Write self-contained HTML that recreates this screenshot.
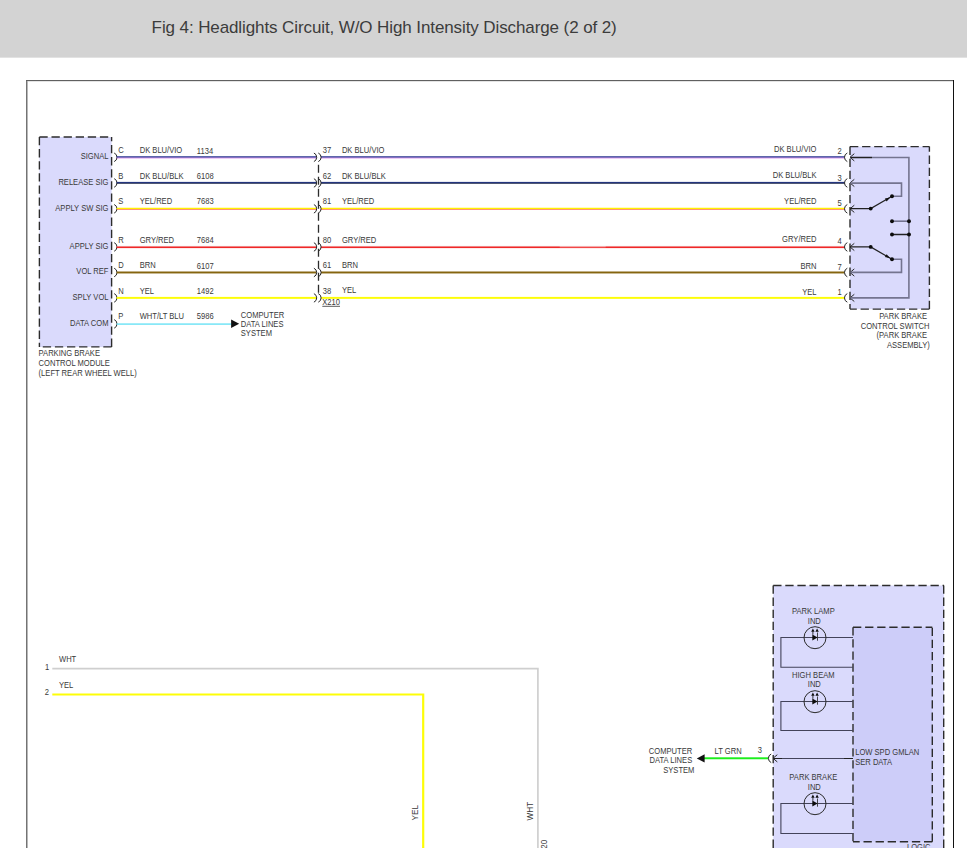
<!DOCTYPE html>
<html lang="en"><head><meta charset="utf-8"><title>Fig 4: Headlights Circuit, W/O High Intensity Discharge (2 of 2)</title>
<style>
html,body{margin:0;padding:0;background:#fff;}
body{width:967px;height:868px;position:relative;overflow:hidden;font-family:"Liberation Sans",Arial,sans-serif;}
#hdr{position:absolute;left:0;top:0;width:967px;height:57px;background:#d3d3d3;}
#ttl{position:absolute;left:151.6px;top:17px;font-size:17px;line-height:22px;color:#3c3c3c;white-space:nowrap;letter-spacing:-0.1px}
svg{position:absolute;left:0;top:0;}
svg text{font-family:"Liberation Sans",Arial,sans-serif;fill:#3a3a3a;}
.k{fill:none;stroke:#222;stroke-width:1;}
.g2{fill:none;stroke:#43435a;stroke-width:1.1;}
.a{fill:none;stroke:#262626;stroke-width:1;}
.g{fill:none;stroke:#74748f;stroke-width:1.6;}
.d{fill:none;stroke:#2c2c2c;stroke-width:1.4;stroke-dasharray:8.3 3.8;}
</style></head><body>
<div id="hdr"></div>
<div id="ttl">Fig 4: Headlights Circuit, W/O High Intensity Discharge (2 of 2)</div>
<svg width="967" height="868" viewBox="0 0 967 868">

<rect x="0" y="57" width="967" height="1" fill="#e2e2e2"/>
<rect x="26" y="80" width="1" height="768" fill="#737373"/>
<rect x="27" y="80" width="0.7" height="768" fill="#9a9a9a"/>
<rect x="26" y="80" width="928" height="1" fill="#606060"/>
<rect x="27" y="81" width="927" height="0.4" fill="#bbb"/>
<rect x="953" y="80" width="1" height="768" fill="#111"/>
<rect x="39.4" y="137" width="72.2" height="210" fill="#dadafc"/>
<path d="M39.4 137 H111.6" class="d"/><path d="M39.4 137 V346.9" class="d"/><path d="M111.6 346.9 H39.4" class="d"/><path d="M111.6 346.9 V137" class="d"/>
<rect x="850" y="146.6" width="79.4" height="162.5" fill="#dadafc"/>
<path d="M850 146.6 H929.4" class="d"/><path d="M850 146.6 V309.1" class="d"/><path d="M929.4 309.1 H850" class="d"/><path d="M929.4 309.1 V146.6" class="d"/>
<text transform="translate(108.5 159.20000000000002) scale(0.915 1)" text-anchor="end" font-size="8.3">SIGNAL</text>
<path d="M114.2 153.00 A4.7 4.7 0 0 1 114.2 161.60" class="a"/>
<text transform="translate(118.3 152.8) scale(0.915 1)" text-anchor="start" font-size="8.3">C</text>
<text transform="translate(139.7 152.8) scale(0.915 1)" text-anchor="start" font-size="8.3">DK BLU/VIO</text>
<text transform="translate(196.8 153.7) scale(0.915 1)" text-anchor="start" font-size="8.3">1134</text>
<rect x="116.6" y="156.25" width="199.9" height="1.45" fill="#2a3590"/>
<rect x="116.6" y="157.70" width="199.9" height="0.65" fill="#cc6ee6"/>
<rect x="321" y="156.25" width="523.6" height="1.45" fill="#2a3590"/>
<rect x="321" y="157.70" width="523.6" height="0.65" fill="#cc6ee6"/>
<path d="M313.9 153.00 A4.7 4.7 0 0 1 313.9 161.60" class="a"/>
<path d="M318.3 153.00 A4.7 4.7 0 0 1 318.3 161.60" class="a"/>
<text transform="translate(322.8 152.7) scale(0.915 1)" text-anchor="start" font-size="8.3">37</text>
<text transform="translate(341.9 152.7) scale(0.915 1)" text-anchor="start" font-size="8.3">DK BLU/VIO</text>
<text transform="translate(816.5 151.8) scale(0.915 1)" text-anchor="end" font-size="8.3">DK BLU/VIO</text>
<text transform="translate(837.4 153.7) scale(0.915 1)" text-anchor="start" font-size="8.3">2</text>
<path d="M847.3 153.00 A4.7 4.7 0 0 0 847.3 161.60" class="a"/>
<path d="M854.3 153.70 L850 157.30 L854.3 160.90" class="a"/>
<text transform="translate(108.5 184.85) scale(0.915 1)" text-anchor="end" font-size="8.3">RELEASE SIG</text>
<path d="M114.2 178.65 A4.7 4.7 0 0 1 114.2 187.25" class="a"/>
<text transform="translate(118.3 178.9) scale(0.915 1)" text-anchor="start" font-size="8.3">B</text>
<text transform="translate(139.7 178.9) scale(0.915 1)" text-anchor="start" font-size="8.3">DK BLU/BLK</text>
<text transform="translate(196.8 178.9) scale(0.915 1)" text-anchor="start" font-size="8.3">6108</text>
<rect x="116.6" y="181.90" width="199.9" height="1.45" fill="#24357e"/>
<rect x="116.6" y="183.35" width="199.9" height="0.65" fill="#1c2440"/>
<rect x="321" y="181.90" width="523.6" height="1.45" fill="#24357e"/>
<rect x="321" y="183.35" width="523.6" height="0.65" fill="#1c2440"/>
<path d="M313.9 178.65 A4.7 4.7 0 0 1 313.9 187.25" class="a"/>
<path d="M318.3 178.65 A4.7 4.7 0 0 1 318.3 187.25" class="a"/>
<text transform="translate(322.8 178.8) scale(0.915 1)" text-anchor="start" font-size="8.3">62</text>
<text transform="translate(341.9 178.8) scale(0.915 1)" text-anchor="start" font-size="8.3">DK BLU/BLK</text>
<text transform="translate(816.5 177.7) scale(0.915 1)" text-anchor="end" font-size="8.3">DK BLU/BLK</text>
<text transform="translate(837.4 180.8) scale(0.915 1)" text-anchor="start" font-size="8.3">3</text>
<path d="M847.3 178.65 A4.7 4.7 0 0 0 847.3 187.25" class="a"/>
<path d="M854.3 179.35 L850 182.95 L854.3 186.55" class="a"/>
<text transform="translate(108.5 210.70000000000002) scale(0.915 1)" text-anchor="end" font-size="8.3">APPLY SW SIG</text>
<path d="M114.2 204.50 A4.7 4.7 0 0 1 114.2 213.10" class="a"/>
<text transform="translate(118.3 203.8) scale(0.915 1)" text-anchor="start" font-size="8.3">S</text>
<text transform="translate(139.7 203.8) scale(0.915 1)" text-anchor="start" font-size="8.3">YEL/RED</text>
<text transform="translate(196.8 203.8) scale(0.915 1)" text-anchor="start" font-size="8.3">7683</text>
<rect x="116.6" y="207.75" width="199.9" height="1.45" fill="#fff000"/>
<rect x="116.6" y="209.20" width="199.9" height="0.65" fill="#ff5a4a"/>
<rect x="321" y="207.75" width="523.6" height="1.45" fill="#fff000"/>
<rect x="321" y="209.20" width="523.6" height="0.65" fill="#ff5a4a"/>
<path d="M313.9 204.50 A4.7 4.7 0 0 1 313.9 213.10" class="a"/>
<path d="M318.3 204.50 A4.7 4.7 0 0 1 318.3 213.10" class="a"/>
<text transform="translate(322.8 203.7) scale(0.915 1)" text-anchor="start" font-size="8.3">81</text>
<text transform="translate(341.9 203.7) scale(0.915 1)" text-anchor="start" font-size="8.3">YEL/RED</text>
<text transform="translate(816.5 203.7) scale(0.915 1)" text-anchor="end" font-size="8.3">YEL/RED</text>
<text transform="translate(837.4 205.6) scale(0.915 1)" text-anchor="start" font-size="8.3">5</text>
<path d="M847.3 204.50 A4.7 4.7 0 0 0 847.3 213.10" class="a"/>
<path d="M854.3 205.20 L850 208.80 L854.3 212.40" class="a"/>
<text transform="translate(108.5 248.85) scale(0.915 1)" text-anchor="end" font-size="8.3">APPLY SIG</text>
<path d="M114.2 242.65 A4.7 4.7 0 0 1 114.2 251.25" class="a"/>
<text transform="translate(118.3 242.8) scale(0.915 1)" text-anchor="start" font-size="8.3">R</text>
<text transform="translate(139.7 242.8) scale(0.915 1)" text-anchor="start" font-size="8.3">GRY/RED</text>
<text transform="translate(196.8 242.8) scale(0.915 1)" text-anchor="start" font-size="8.3">7684</text>
<rect x="116.6" y="245.85" width="199.9" height="0.6" fill="#e4e4e4"/>
<rect x="116.6" y="246.45" width="199.9" height="1.65" fill="#f02828"/>
<rect x="321" y="245.85" width="523.6" height="0.6" fill="#e4e4e4"/>
<rect x="321" y="246.45" width="523.6" height="1.65" fill="#f02828"/>
<path d="M313.9 242.65 A4.7 4.7 0 0 1 313.9 251.25" class="a"/>
<path d="M318.3 242.65 A4.7 4.7 0 0 1 318.3 251.25" class="a"/>
<text transform="translate(322.8 242.8) scale(0.915 1)" text-anchor="start" font-size="8.3">80</text>
<text transform="translate(341.9 242.8) scale(0.915 1)" text-anchor="start" font-size="8.3">GRY/RED</text>
<text transform="translate(816.5 241.9) scale(0.915 1)" text-anchor="end" font-size="8.3">GRY/RED</text>
<text transform="translate(837.4 243.5) scale(0.915 1)" text-anchor="start" font-size="8.3">4</text>
<path d="M847.3 242.65 A4.7 4.7 0 0 0 847.3 251.25" class="a"/>
<path d="M854.3 243.35 L850 246.95 L854.3 250.55" class="a"/>
<text transform="translate(108.5 274.4) scale(0.915 1)" text-anchor="end" font-size="8.3">VOL REF</text>
<path d="M114.2 268.20 A4.7 4.7 0 0 1 114.2 276.80" class="a"/>
<text transform="translate(118.3 267.9) scale(0.915 1)" text-anchor="start" font-size="8.3">D</text>
<text transform="translate(139.7 267.9) scale(0.915 1)" text-anchor="start" font-size="8.3">BRN</text>
<text transform="translate(196.8 268.7) scale(0.915 1)" text-anchor="start" font-size="8.3">6107</text>
<rect x="116.6" y="271.50" width="199.9" height="1.95" fill="#85650f"/>
<rect x="321" y="271.50" width="523.6" height="1.95" fill="#85650f"/>
<path d="M313.9 268.20 A4.7 4.7 0 0 1 313.9 276.80" class="a"/>
<path d="M318.3 268.20 A4.7 4.7 0 0 1 318.3 276.80" class="a"/>
<text transform="translate(322.8 267.9) scale(0.915 1)" text-anchor="start" font-size="8.3">61</text>
<text transform="translate(341.9 267.9) scale(0.915 1)" text-anchor="start" font-size="8.3">BRN</text>
<text transform="translate(816.5 268.7) scale(0.915 1)" text-anchor="end" font-size="8.3">BRN</text>
<text transform="translate(837.4 269.6) scale(0.915 1)" text-anchor="start" font-size="8.3">7</text>
<path d="M847.3 268.20 A4.7 4.7 0 0 0 847.3 276.80" class="a"/>
<path d="M854.3 268.90 L850 272.50 L854.3 276.10" class="a"/>
<text transform="translate(108.5 299.79999999999995) scale(0.915 1)" text-anchor="end" font-size="8.3">SPLY VOL</text>
<path d="M114.2 293.60 A4.7 4.7 0 0 1 114.2 302.20" class="a"/>
<text transform="translate(118.3 293.9) scale(0.915 1)" text-anchor="start" font-size="8.3">N</text>
<text transform="translate(139.7 293.9) scale(0.915 1)" text-anchor="start" font-size="8.3">YEL</text>
<text transform="translate(196.8 293.9) scale(0.915 1)" text-anchor="start" font-size="8.3">1492</text>
<rect x="116.6" y="296.90" width="199.9" height="1.95" fill="#fdfd08"/>
<rect x="321" y="296.90" width="523.6" height="1.95" fill="#fdfd08"/>
<path d="M313.9 293.60 A4.7 4.7 0 0 1 313.9 302.20" class="a"/>
<path d="M318.3 293.60 A4.7 4.7 0 0 1 318.3 302.20" class="a"/>
<text transform="translate(322.8 293.6) scale(0.915 1)" text-anchor="start" font-size="8.3">38</text>
<text transform="translate(341.9 292.6) scale(0.915 1)" text-anchor="start" font-size="8.3">YEL</text>
<text transform="translate(816.5 294.6) scale(0.915 1)" text-anchor="end" font-size="8.3">YEL</text>
<text transform="translate(837.4 294.6) scale(0.915 1)" text-anchor="start" font-size="8.3">1</text>
<path d="M847.3 293.60 A4.7 4.7 0 0 0 847.3 302.20" class="a"/>
<path d="M854.3 294.30 L850 297.90 L854.3 301.50" class="a"/>
<text transform="translate(108.5 325.79999999999995) scale(0.915 1)" text-anchor="end" font-size="8.3">DATA COM</text>
<path d="M114.2 319.60 A4.7 4.7 0 0 1 114.2 328.20" class="a"/>
<text transform="translate(118.3 318.5) scale(0.915 1)" text-anchor="start" font-size="8.3">P</text>
<text transform="translate(139.7 318.5) scale(0.915 1)" text-anchor="start" font-size="8.3">WHT/LT BLU</text>
<text transform="translate(196.8 318.8) scale(0.915 1)" text-anchor="start" font-size="8.3">5986</text>
<rect x="559.7" y="246.4" width="46" height="0.8" fill="#f7c4c4"/>
<path d="M318.5 162 V293.6" class="d" style="stroke-width:1.3;stroke-dasharray:8 4;stroke-dashoffset:-2.7"/>
<text transform="translate(322.3 304.8) scale(0.915 1)" text-anchor="start" font-size="8.3" text-decoration="underline">X210</text>
<rect x="116.6" y="323.35" width="115" height="1.5" fill="#74e4f6"/>
<path d="M231.1 319.4 L239.2 323.7 L231.1 328 Z" fill="#111"/>
<text transform="translate(240.8 317.8) scale(0.915 1)" text-anchor="start" font-size="8.3">COMPUTER</text>
<text transform="translate(240.8 326.9) scale(0.915 1)" text-anchor="start" font-size="8.3">DATA LINES</text>
<text transform="translate(240.8 336) scale(0.915 1)" text-anchor="start" font-size="8.3">SYSTEM</text>
<text transform="translate(38.6 355.8) scale(0.915 1)" text-anchor="start" font-size="8.3">PARKING BRAKE</text>
<text transform="translate(38.6 365.6) scale(0.915 1)" text-anchor="start" font-size="8.3">CONTROL MODULE</text>
<text transform="translate(38.6 375.6) scale(0.915 1)" text-anchor="start" font-size="8.3">(LEFT REAR WHEEL WELL)</text>
<path d="M850.3 157.5 H908.9 V297.9 H850.3" class="g"/>
<path d="M850.3 157.5 H872" class="k" style="stroke-width:1.3"/>
<path d="M850.3 183.1 H901.5 V196.3 H892" class="g"/>
<path d="M850.3 272.4 H901.5 V259.3 H892" class="g"/>
<path d="M850.3 208.6 H870.7 L892 196.3" class="k" style="stroke-width:1.2"/>
<path d="M850.3 246.9 H870.7 L892 259.3" class="k" style="stroke-width:1.2"/>
<path d="M892 221.2 H909" class="g"/>
<path d="M892 234.5 H909" class="k" style="stroke-width:1.5"/>
<circle cx="870.7" cy="208.6" r="1.95" fill="#0c0c0c"/>
<circle cx="892" cy="196.3" r="1.95" fill="#0c0c0c"/>
<circle cx="892" cy="221.2" r="1.95" fill="#0c0c0c"/>
<circle cx="909" cy="221.2" r="1.95" fill="#0c0c0c"/>
<circle cx="892" cy="234.5" r="1.95" fill="#0c0c0c"/>
<circle cx="909" cy="234.5" r="1.95" fill="#0c0c0c"/>
<circle cx="870.7" cy="246.9" r="1.95" fill="#0c0c0c"/>
<circle cx="892" cy="259.3" r="1.95" fill="#0c0c0c"/>
<path d="M890.2 197.4 L884.9 198.5 L886.6 201.4 Z" fill="#111"/>
<path d="M890.2 258.2 L884.9 257.1 L886.6 254.2 Z" fill="#111"/>
<text transform="translate(927 319) scale(0.915 1)" text-anchor="end" font-size="8.3">PARK BRAKE</text>
<text transform="translate(929.5 329) scale(0.915 1)" text-anchor="end" font-size="8.3">CONTROL SWITCH</text>
<text transform="translate(927 338) scale(0.915 1)" text-anchor="end" font-size="8.3">(PARK BRAKE</text>
<text transform="translate(929.8 348) scale(0.915 1)" text-anchor="end" font-size="8.3">ASSEMBLY)</text>
<rect x="773.2" y="585.5" width="170.8" height="263" fill="#dadafc"/>
<path d="M773.2 585.5 H944" class="d"/><path d="M773.2 585.5 V848" class="d"/><path d="M943.7 585.5 V848" class="d"/>
<rect x="853" y="627.2" width="79.3" height="214.5" fill="#cdcdf9"/>
<path d="M853 627.2 H932.3" class="d"/><path d="M853 627.2 V841.7" class="d"/><path d="M932.3 841.7 H853" class="d"/><path d="M932.3 841.7 V627.2" class="d"/>
<path d="M853 637.5 H780.9 V667.3 H853" class="g2"/>
<circle cx="815" cy="637.7" r="11" class="k" style="stroke:#2a2a2a"/>
<path d="M812.3 634.4 L817.6 637.5 L812.3 640.6 Z" fill="#0c0c0c"/>
<path d="M817.5 632.5 V640.7" class="k" style="stroke-width:.9;stroke:#333"/>
<path d="M812.9 634.7 V631.5" class="k" style="stroke-width:.9"/>
<path d="M811.2 631.8 L812.9 628.6 L814.6 631.8 Z M815.4 631.8 L817.1 628.6 L818.8 631.8 Z" fill="#0c0c0c"/>
<path d="M853 701.5 H780.9 V730.5 H853" class="g2"/>
<circle cx="815" cy="701.7" r="11" class="k" style="stroke:#2a2a2a"/>
<path d="M812.3 698.4 L817.6 701.5 L812.3 704.6 Z" fill="#0c0c0c"/>
<path d="M817.5 696.5 V704.7" class="k" style="stroke-width:.9;stroke:#333"/>
<path d="M812.9 698.7 V695.5" class="k" style="stroke-width:.9"/>
<path d="M811.2 695.8 L812.9 692.6 L814.6 695.8 Z M815.4 695.8 L817.1 692.6 L818.8 695.8 Z" fill="#0c0c0c"/>
<path d="M853 803.5 H780.9 V833.5 H853" class="g2"/>
<circle cx="815" cy="803.7" r="11" class="k" style="stroke:#2a2a2a"/>
<path d="M812.3 800.4 L817.6 803.5 L812.3 806.6 Z" fill="#0c0c0c"/>
<path d="M817.5 798.5 V806.7" class="k" style="stroke-width:.9;stroke:#333"/>
<path d="M812.9 800.7 V797.5" class="k" style="stroke-width:.9"/>
<path d="M811.2 797.8 L812.9 794.6 L814.6 797.8 Z M815.4 797.8 L817.1 794.6 L818.8 797.8 Z" fill="#0c0c0c"/>
<text transform="translate(813.3 613.8) scale(0.915 1)" text-anchor="middle" font-size="8.3">PARK LAMP</text>
<text transform="translate(814.3 623.8) scale(0.915 1)" text-anchor="middle" font-size="8.3">IND</text>
<text transform="translate(813.3 677.8) scale(0.915 1)" text-anchor="middle" font-size="8.3">HIGH BEAM</text>
<text transform="translate(814.3 686.8) scale(0.915 1)" text-anchor="middle" font-size="8.3">IND</text>
<text transform="translate(813.3 779.6) scale(0.915 1)" text-anchor="middle" font-size="8.3">PARK BRAKE</text>
<text transform="translate(814.3 789.7) scale(0.915 1)" text-anchor="middle" font-size="8.3">IND</text>
<text transform="translate(855.2 755) scale(0.915 1)" text-anchor="start" font-size="8.3">LOW SPD GMLAN</text>
<text transform="translate(855.2 765) scale(0.915 1)" text-anchor="start" font-size="8.3">SER DATA</text>
<text transform="translate(907 850.4) scale(0.915 1)" text-anchor="start" font-size="8.3">LOGIC</text>
<rect x="704" y="757.30" width="64.29999999999995" height="1.95" fill="#1cee1c"/>
<path d="M704.6 754.2 L696.8 758.4 L704.6 762.6 Z" fill="#111"/>
<path d="M771.2 754.00 A4.7 4.7 0 0 0 771.2 762.60" class="a"/>
<path d="M777.3 754.70 L773 758.30 L777.3 761.90" class="a"/>
<path d="M773.4 758.5 H853" class="g2"/>
<path d="M773.4 758.5 H782 M844 758.5 H853" class="k" style="stroke-width:1.2"/>
<text transform="translate(714.6 754.2) scale(0.915 1)" text-anchor="start" font-size="8.3">LT GRN</text>
<text transform="translate(757.8 753.4) scale(0.915 1)" text-anchor="start" font-size="8.3">3</text>
<text transform="translate(692.2 753.6) scale(0.915 1)" text-anchor="end" font-size="8.3">COMPUTER</text>
<text transform="translate(692.2 763) scale(0.915 1)" text-anchor="end" font-size="8.3">DATA LINES</text>
<text transform="translate(694.4 773) scale(0.915 1)" text-anchor="end" font-size="8.3">SYSTEM</text>
<path d="M52.3 668.7 H537.9 V848" fill="none" stroke="#cfcfcf" stroke-width="1.7"/>
<path d="M52.3 694.5 H423.2 V848" fill="none" stroke="#fdfd08" stroke-width="2.2"/>
<text transform="translate(45 669.7) scale(0.915 1)" text-anchor="start" font-size="8.3">1</text>
<text transform="translate(44.8 694.7) scale(0.915 1)" text-anchor="start" font-size="8.3">2</text>
<text transform="translate(59 662) scale(0.915 1)" text-anchor="start" font-size="8.3">WHT</text>
<text transform="translate(59 687.8) scale(0.915 1)" text-anchor="start" font-size="8.3">YEL</text>
<text transform="translate(418.3 820.4) rotate(-90) scale(0.98 1.04)" font-size="8.3">YEL</text>
<text transform="translate(533.1 820.4) rotate(-90) scale(0.98 1.04)" font-size="8.3">WHT</text>
<text transform="translate(546.8 848.8) rotate(-90) scale(0.98 1.04)" font-size="8.3">20</text>
<rect x="0" y="848" width="967" height="20" fill="#fff"/>
</svg>
</body></html>
